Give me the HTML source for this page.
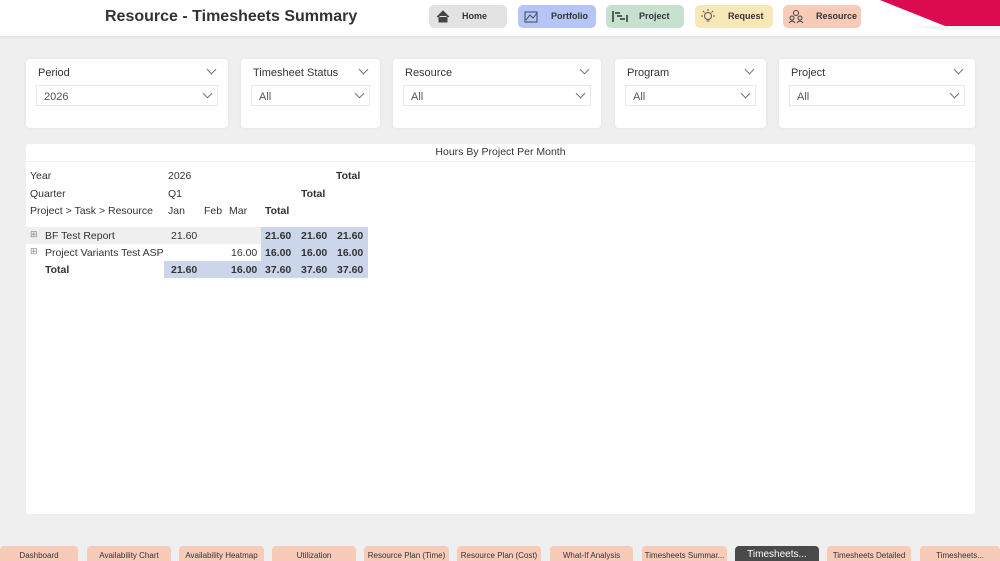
<!DOCTYPE html><html><head><style>
body{margin:0;width:1000px;height:561px;background:#efefef;font-family:"Liberation Sans",sans-serif;position:relative;overflow:hidden}
.a{position:absolute}
.hdr{left:0;top:0;width:1000px;height:36px;background:#fff;box-shadow:0 1px 3px rgba(0,0,0,.08)}
.title{left:105px;top:8px;font-size:16px;font-weight:bold;color:#333}
.btn{top:5px;height:23px;width:78px;border-radius:5px;font-size:9px;font-weight:bold;color:#333;box-sizing:border-box;padding:6px 0 0 33px}
.card{background:#fff;border-radius:4px;top:59px;height:69px;box-shadow:0 0 4px rgba(0,0,0,.05)}
.lab{position:absolute;left:12px;top:8px;font-size:11px;color:#333}
.sel{position:absolute;top:26px;height:21px;border:1px solid #e8e8e8;font-size:11px;color:#555;box-sizing:border-box;padding:5px 0 0 7px}
.chev{position:absolute;width:6px;height:6px;border-right:1px solid #777;border-bottom:1px solid #777;transform:rotate(45deg)}
.tab{top:546px;height:15px;background:#f8cbb9;border-radius:4px 4px 0 0;font-size:8px;color:#333;text-align:center;padding-top:5px;box-sizing:border-box}
.t{position:absolute;font-size:10.5px;color:#333}
.b{font-weight:bold}
</style></head><body>
<div class="a hdr"></div>
<svg class="a" style="left:870px;top:0" width="130" height="30"><polygon points="10,0 130,0 130,26 75,26" fill="#dc0a4e"/><polygon points="40,26 130,26 130,30 70,30" fill="#f4f4f4"/></svg>
<div class="a title">Resource - Timesheets Summary</div>
<div class="a btn" style="left:429px;background:#e3e3e3">Home</div>
<div class="a btn" style="left:518px;background:#b5c5f5">Portfolio</div>
<div class="a btn" style="left:606px;background:#c7e1d0">Project</div>
<div class="a btn" style="left:695px;background:#f8e8b8">Request</div>
<div class="a btn" style="left:783px;background:#f8cbb9">Resource</div>
<svg class="a" style="left:436px;top:10px" width="14" height="13"><path d="M1 7 L7 1 L13 7 M3 6 V12 H11 V6" fill="#444" stroke="#444"/></svg>
<svg class="a" style="left:524px;top:10px" width="15" height="13"><rect x="1" y="2" width="12" height="10" fill="none" stroke="#445"/><path d="M2 10 L6 5 L9 8 L13 3" fill="none" stroke="#445"/></svg>
<svg class="a" style="left:612px;top:10px" width="16" height="13"><path d="M1 1V12 M15 5V12 M3 3H8 M5 6H10 M8 9H13" stroke="#333" stroke-width="1.5"/></svg>
<svg class="a" style="left:701px;top:9px" width="14" height="15"><circle cx="7" cy="7" r="3.5" fill="none" stroke="#555"/><path d="M7 0V2 M0 7H2 M12 7H14 M2 2L3.5 3.5 M12 2L10.5 3.5 M5.5 12H8.5" stroke="#555"/></svg>
<svg class="a" style="left:788px;top:9px" width="16" height="15"><circle cx="8" cy="4" r="2.5" fill="none" stroke="#444"/><circle cx="4" cy="9" r="2" fill="none" stroke="#444"/><circle cx="12" cy="9" r="2" fill="none" stroke="#444"/><path d="M1 14Q4 10 7 14 M9 14Q12 10 15 14" fill="none" stroke="#444"/></svg>

<div class="a card" style="left:26px;width:202px"><span class="lab">Period</span><i class="chev" style="left:182px;top:7px"></i><div class="sel" style="left:10px;width:182px">2026</div><i class="chev" style="left:178px;top:31px"></i></div>
<div class="a card" style="left:241px;width:139px"><span class="lab">Timesheet Status</span><i class="chev" style="left:119px;top:7px"></i><div class="sel" style="left:10px;width:119px">All</div><i class="chev" style="left:115px;top:31px"></i></div>
<div class="a card" style="left:393px;width:208px"><span class="lab">Resource</span><i class="chev" style="left:188px;top:7px"></i><div class="sel" style="left:10px;width:188px">All</div><i class="chev" style="left:184px;top:31px"></i></div>
<div class="a card" style="left:615px;width:151px"><span class="lab">Program</span><i class="chev" style="left:131px;top:7px"></i><div class="sel" style="left:10px;width:131px">All</div><i class="chev" style="left:127px;top:31px"></i></div>
<div class="a card" style="left:779px;width:196px"><span class="lab">Project</span><i class="chev" style="left:176px;top:7px"></i><div class="sel" style="left:10px;width:176px">All</div><i class="chev" style="left:172px;top:31px"></i></div>

<div class="a" style="left:26px;top:144px;width:949px;height:370px;background:#fff;border-radius:3px">
<div style="position:absolute;left:0;top:0;width:949px;height:18px;border-bottom:1px solid #eee;text-align:center;font-size:10.5px;color:#333;padding-top:2px;box-sizing:border-box">Hours By Project Per Month</div>
<div style="position:absolute;left:0;top:83px;width:342px;height:17px;background:#efefef"></div>
<div style="position:absolute;left:235px;top:83px;width:107px;height:51px;background:#ccd6ea"></div>
<div style="position:absolute;left:138px;top:117px;width:97px;height:17px;background:#ccd6ea"></div>
<span class="t" style="left:4px;top:26px">Year</span><span class="t" style="left:142px;top:26px">2026</span><span class="t b" style="left:310px;top:26px">Total</span>
<span class="t" style="left:4px;top:44px">Quarter</span><span class="t" style="left:142px;top:44px">Q1</span><span class="t b" style="left:275px;top:44px">Total</span>
<span class="t" style="left:4px;top:61px">Project &gt; Task &gt; Resource</span><span class="t" style="left:142px;top:61px">Jan</span><span class="t" style="left:178px;top:61px">Feb</span><span class="t" style="left:203px;top:61px">Mar</span><span class="t b" style="left:239px;top:61px">Total</span>
<span class="t" style="left:4px;top:85px;font-size:9px;color:#888">⊞</span><span class="t" style="left:19px;top:86px">BF Test Report</span><span class="t" style="left:145px;top:86px">21.60</span><span class="t b" style="left:239px;top:86px">21.60</span><span class="t b" style="left:275px;top:86px">21.60</span><span class="t b" style="left:311px;top:86px">21.60</span>
<span class="t" style="left:4px;top:102px;font-size:9px;color:#888">⊞</span><span class="t" style="left:19px;top:103px">Project Variants Test ASP</span><span class="t" style="left:205px;top:103px">16.00</span><span class="t b" style="left:239px;top:103px">16.00</span><span class="t b" style="left:275px;top:103px">16.00</span><span class="t b" style="left:311px;top:103px">16.00</span>
<span class="t b" style="left:19px;top:120px">Total</span><span class="t b" style="left:145px;top:120px">21.60</span><span class="t b" style="left:205px;top:120px">16.00</span><span class="t b" style="left:239px;top:120px">37.60</span><span class="t b" style="left:275px;top:120px">37.60</span><span class="t b" style="left:311px;top:120px">37.60</span>
</div>

<div class="a tab" style="left:0;width:78px">Dashboard</div>
<div class="a tab" style="left:87px;width:84px">Availability Chart</div>
<div class="a tab" style="left:179px;width:85px">Availability Heatmap</div>
<div class="a tab" style="left:272px;width:84px">Utilization</div>
<div class="a tab" style="left:364px;width:85px">Resource Plan (Time)</div>
<div class="a tab" style="left:457px;width:84px">Resource Plan (Cost)</div>
<div class="a tab" style="left:550px;width:83px">What-If Analysis</div>
<div class="a tab" style="left:642px;width:85px">Timesheets Summar...</div>
<div class="a tab" style="left:735px;width:84px;background:#4a4a4a;color:#fff;font-size:10px;padding-top:3px">Timesheets...</div>
<div class="a tab" style="left:827px;width:84px">Timesheets Detailed</div>
<div class="a tab" style="left:920px;width:80px">Timesheets...</div>
</body></html>
